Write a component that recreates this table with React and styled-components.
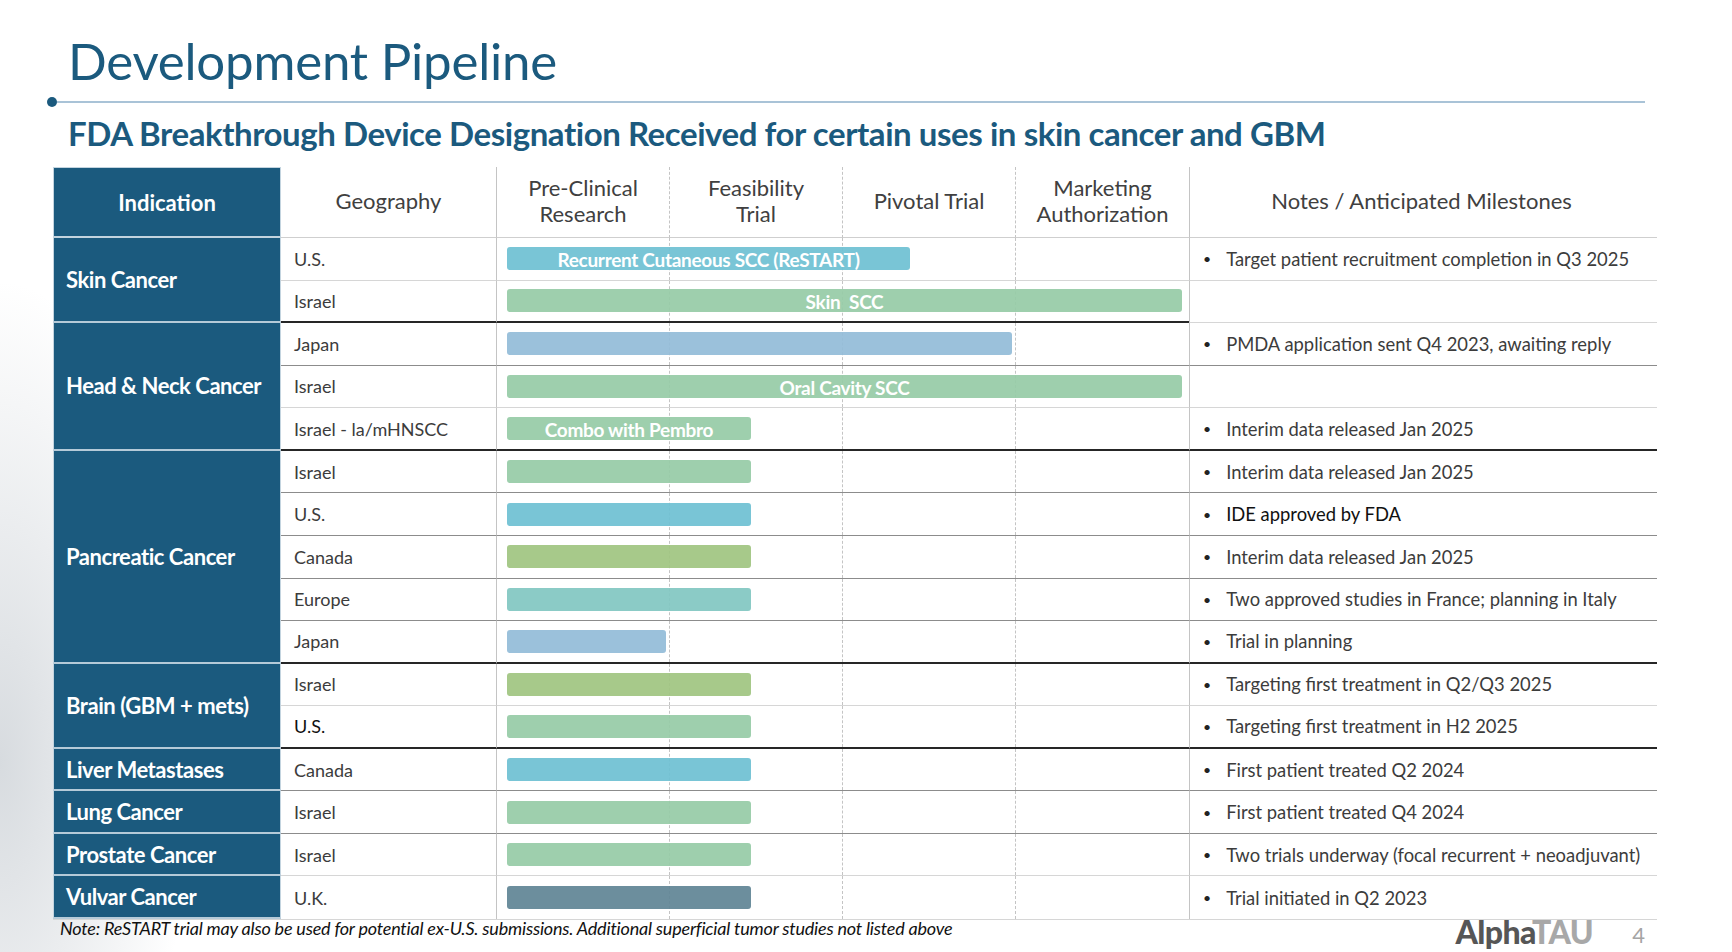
import React from 'react';
import styled, { createGlobalStyle } from 'styled-components';

const GlobalStyle = createGlobalStyle`
  html, body {
    margin: 0;
    padding: 0;
  }
  body {
    font-family: Lato, "Open Sans", sans-serif;
    background: #fff;
  }
`;

const colors = {
    navy: '#1b5a7e',
    teal: 'rgba(110, 192, 210, 0.92)',
    green: 'rgba(150, 203, 166, 0.92)',
    sky: 'rgba(146, 188, 216, 0.92)',
    olive: 'rgba(160, 196, 128, 0.92)',
    aqua: 'rgba(129, 199, 193, 0.92)',
    slate: 'rgba(96, 132, 149, 0.92)',
};

const lines = {
    light: '1px solid #d6d6d6',
    mid: '1px solid #8c8c8c',
    dark: '2px solid #262626',
};

const Page = styled.div`
    position: relative;
    width: 1732px;
    height: 952px;
    overflow: hidden;
    box-sizing: border-box;
    padding: 31px 0 0 53px;
    background:
        radial-gradient(ellipse 190px 480px at 0% 80%, rgba(205, 210, 215, 0.8), rgba(255, 255, 255, 0) 100%),
        #fff;
`;

const Title = styled.h1`
    margin: 0 0 0 15px;
    font-size: 51px;
    line-height: 60px;
    font-weight: 400;
    color: ${colors.navy};
    letter-spacing: -0.2px;
`;

const Rule = styled.div`
    display: flex;
    align-items: center;
    width: 1598px;
    margin: 6px 0 0 -6px;

    &::before {
        content: '';
        width: 10px;
        height: 10px;
        border-radius: 50%;
        background: ${colors.navy};
        flex: none;
    }

    &::after {
        content: '';
        flex: 1;
        height: 2px;
        background: #a9c3d7;
    }
`;

const Subtitle = styled.h2`
    margin: 6px 0 0 15px;
    font-size: 33px;
    line-height: 40px;
    font-weight: 700;
    color: ${colors.navy};
    letter-spacing: -0.44px;
`;

const Table = styled.div`
    display: grid;
    grid-template-columns: 228px 216px 692px 468px;
    grid-template-rows: 71px repeat(16, 42.5625px);
    margin-top: 14px;
    width: 1604px;
    border-bottom: 1px solid #d6d6d6;
`;

const IndicationHead = styled.div`
    grid-column: 1;
    background: ${colors.navy};
    color: #fff;
    font-size: 22px;
    font-weight: 700;
    display: flex;
    align-items: center;
    justify-content: center;
    border: 1px solid #c3d4df;
    border-bottom-width: 2px;
`;

const HeadCell = styled.div`
    display: flex;
    align-items: center;
    justify-content: center;
    text-align: center;
    font-size: 22px;
    line-height: 26.5px;
    color: #404040;
    border-bottom: 1px solid #cfcfcf;
    border-right: ${p => p.$dashed ? '1px dashed #c4c4c4' : 'none'};
    padding-bottom: 2px;
`;

const GeoHead = styled(HeadCell)`
    grid-column: 2;
    border-right: 1px solid #c4c4c4;
`;

const StageHeads = styled.div`
    grid-column: 3;
    display: grid;
    grid-template-columns: repeat(4, 1fr);
`;

const NoteHead = styled(HeadCell)`
    grid-column: 4;
    border-left: 1px solid #c4c4c4;
    padding-right: 4px;
`;

const Indication = styled.div`
    grid-column: 1;
    grid-row: span ${p => p.$span};
    background: ${colors.navy};
    color: #fff;
    font-size: 22px;
    font-weight: 700;
    letter-spacing: -0.45px;
    display: flex;
    align-items: center;
    padding-left: 12px;
    border-left: 1px solid #c3d4df;
    border-right: 1px solid #c3d4df;
    border-bottom: 2px solid #b5cad8;
`;

const Geo = styled.div`
    grid-column: 2;
    display: flex;
    align-items: center;
    padding-left: 13px;
    font-size: 18px;
    color: ${p => p.$strong ? '#111' : '#3c3c3c'};
    border-bottom: ${p => lines[p.$line]};
    border-right: 1px solid #c4c4c4;
`;

const Stage = styled.div`
    grid-column: 3;
    display: grid;
    grid-template-columns: repeat(4, 1fr);
    align-items: center;
    border-bottom: ${p => lines[p.$line]};
`;

const Lane = styled.div`
    grid-row: 1;
    grid-column: ${p => p.$col};
    align-self: stretch;
    border-right: ${p => p.$col < 4 ? '1px dashed #c4c4c4' : 'none'};
`;

const Bar = styled.div`
    grid-row: 1;
    grid-column: 1 / -1;
    justify-self: start;
    margin-left: 10px;
    width: ${p => p.$width}px;
    height: 23px;
    border-radius: 3px;
    background: ${p => colors[p.$color]};
    color: #fff;
    font-size: 19px;
    font-weight: 700;
    letter-spacing: -0.3px;
    white-space: pre;
    display: flex;
    align-items: center;
    justify-content: center;
    line-height: 1;
    padding-top: 2px;
    box-sizing: border-box;
`;

const Note = styled.div`
    grid-column: 4;
    display: flex;
    align-items: center;
    gap: 15px;
    padding-left: 13px;
    font-size: 18.4px;
    color: ${p => p.$strong ? '#111' : '#3c3c3c'};
    border-bottom: ${p => lines[p.$line]};
    border-left: 1px solid #c4c4c4;

    &::before {
        content: ${p => p.$empty ? 'none' : "'\\2022'"};
        font-size: 14px;
        color: #222;
    }
`;

const Footer = styled.div`
    display: flex;
    align-items: flex-start;
    width: 1604px;
`;

const Footnote = styled.div`
    flex: 1;
    margin: -1px 0 0 7px;
    font-size: 18px;
    font-style: italic;
    letter-spacing: -0.2px;
    color: #111;
    line-height: 18px;
`;

const Logo = styled.div`
    margin-top: -3px;
    font-size: 32px;
    font-weight: 900;
    letter-spacing: -0.6px;
    line-height: 30px;
    color: #565656;

    span {
        color: #a8a8a8;
    }
`;

const PageNum = styled.div`
    width: 64px;
    padding-right: 12px;
    text-align: right;
    box-sizing: border-box;
    font-size: 22px;
    line-height: 30px;
    color: #a5a5a5;
`;

const stageNames = [
    ['Pre-Clinical', 'Research'],
    ['Feasibility', 'Trial'],
    ['Pivotal Trial'],
    ['Marketing', 'Authorization'],
];

const groups = [
    {
        name: 'Skin Cancer',
        rows: [
            { geo: 'U.S.', width: 403, color: 'teal', label: 'Recurrent Cutaneous SCC (ReSTART)', note: 'Target patient recruitment completion in Q3 2025', line: 'light' },
            { geo: 'Israel', width: 675, color: 'green', label: 'Skin  SCC', line: 'dark', noteLine: 'light' },
        ],
    },
    {
        name: 'Head & Neck Cancer',
        rows: [
            { geo: 'Japan', width: 505, color: 'sky', note: 'PMDA application sent Q4 2023, awaiting reply', line: 'mid' },
            { geo: 'Israel', width: 675, color: 'green', label: 'Oral Cavity SCC', line: 'light' },
            { geo: 'Israel - la/mHNSCC', width: 244, color: 'green', label: 'Combo with Pembro', note: 'Interim data released Jan 2025', line: 'dark' },
        ],
    },
    {
        name: 'Pancreatic Cancer',
        rows: [
            { geo: 'Israel', width: 244, color: 'green', note: 'Interim data released Jan 2025', line: 'mid' },
            { geo: 'U.S.', width: 244, color: 'teal', note: 'IDE approved by FDA', strongNote: true, line: 'mid' },
            { geo: 'Canada', width: 244, color: 'olive', note: 'Interim data released Jan 2025', line: 'mid' },
            { geo: 'Europe', width: 244, color: 'aqua', note: 'Two approved studies in France; planning in Italy', line: 'mid' },
            { geo: 'Japan', width: 159, color: 'sky', note: 'Trial in planning', line: 'dark' },
        ],
    },
    {
        name: 'Brain (GBM + mets)',
        rows: [
            { geo: 'Israel', width: 244, color: 'olive', note: 'Targeting first treatment in Q2/Q3 2025', line: 'light' },
            { geo: 'U.S.', strongGeo: true, width: 244, color: 'green', note: 'Targeting first treatment in H2 2025', line: 'dark' },
        ],
    },
    {
        name: 'Liver Metastases',
        rows: [{ geo: 'Canada', width: 244, color: 'teal', note: 'First patient treated Q2 2024', line: 'mid' }],
    },
    {
        name: 'Lung Cancer',
        rows: [{ geo: 'Israel', width: 244, color: 'green', note: 'First patient treated Q4 2024', line: 'mid' }],
    },
    {
        name: 'Prostate Cancer',
        rows: [{ geo: 'Israel', width: 244, color: 'green', note: 'Two trials underway (focal recurrent + neoadjuvant)', line: 'light' }],
    },
    {
        name: 'Vulvar Cancer',
        rows: [{ geo: 'U.K.', width: 244, color: 'slate', note: 'Trial initiated in Q2 2023', line: 'none' }],
    },
];

const App = () => {
    return (
        <Page>
            <GlobalStyle />
            <Title>Development Pipeline</Title>
            <Rule />
            <Subtitle>FDA Breakthrough Device Designation Received for certain uses in skin cancer and GBM</Subtitle>

            <Table>
                <IndicationHead>Indication</IndicationHead>
                <GeoHead>Geography</GeoHead>
                <StageHeads>
                    {stageNames.map((name, index) => (
                        <HeadCell key={index} $dashed={index < 3}>
                            {name.map(part => <React.Fragment key={part}>{part}<br /></React.Fragment>)}
                        </HeadCell>
                    ))}
                </StageHeads>
                <NoteHead>Notes / Anticipated Milestones</NoteHead>

                {groups.map(group => (
                    <React.Fragment key={group.name}>
                        <Indication $span={group.rows.length}>{group.name}</Indication>
                        {group.rows.map((row, index) => (
                            <React.Fragment key={index}>
                                <Geo $line={row.line} $strong={row.strongGeo}>{row.geo}</Geo>
                                <Stage $line={row.line}>
                                    {[1, 2, 3, 4].map(col => <Lane key={col} $col={col} />)}
                                    <Bar $width={row.width} $color={row.color}>{row.label}</Bar>
                                </Stage>
                                <Note
                                    $line={row.noteLine || row.line}
                                    $empty={!row.note}
                                    $strong={row.strongNote}
                                >
                                    {row.note}
                                </Note>
                            </React.Fragment>
                        ))}
                    </React.Fragment>
                ))}
            </Table>

            <Footer>
                <Footnote>Note: ReSTART trial may also be used for potential ex-U.S. submissions. Additional superficial tumor studies not listed above</Footnote>
                <Logo>Alpha<span>TAU</span></Logo>
                <PageNum>4</PageNum>
            </Footer>
        </Page>
    );
};

export default App;
